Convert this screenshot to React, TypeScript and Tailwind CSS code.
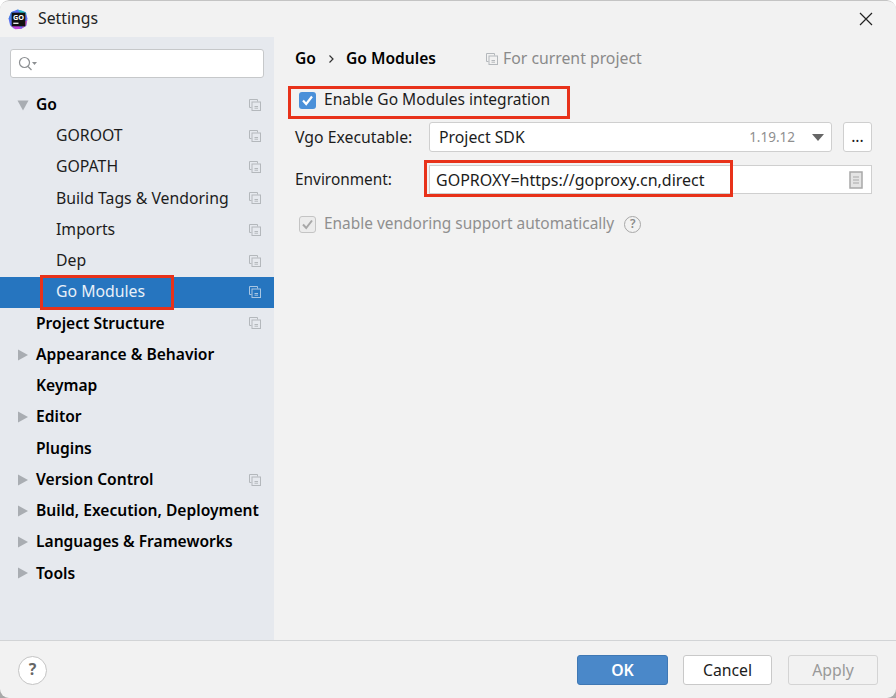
import React from "react";

const CopyIcon = ({ c = "#b4b8bc" }: { c?: string }) => (
  <svg width="12" height="12" viewBox="0 0 12 12" fill="none" stroke={c} strokeWidth="1">
    <path d="M2.5 8.5h-2v-8h8v2" />
    <rect x="3" y="3" width="8.5" height="8.5" fill="none" />
    <path d="M5.5 7.5h3.5M5.5 9.2h3.5" />
  </svg>
);

const Arrow = ({ dir }: { dir: "down" | "right" }) => (
  <svg width="12" height="12" viewBox="0 0 12 12" fill="#a9adb2">
    {dir === "down" ? <path d="M0.5 1.5h11L6 11.5z" /> : <path d="M1 0.5v11L11 6z" />}
  </svg>
);

type Row = { t: string; bold?: boolean; indent?: boolean; arrow?: "down" | "right"; copy?: boolean; sel?: boolean };

const rows: Row[] = [
  { t: "Go", bold: true, arrow: "down", copy: true },
  { t: "GOROOT", indent: true, copy: true },
  { t: "GOPATH", indent: true, copy: true },
  { t: "Build Tags & Vendoring", indent: true, copy: true },
  { t: "Imports", indent: true, copy: true },
  { t: "Dep", indent: true, copy: true },
  { t: "Go Modules", indent: true, copy: true, sel: true },
  { t: "Project Structure", bold: true, copy: true },
  { t: "Appearance & Behavior", bold: true, arrow: "right" },
  { t: "Keymap", bold: true },
  { t: "Editor", bold: true, arrow: "right" },
  { t: "Plugins", bold: true },
  { t: "Version Control", bold: true, arrow: "right", copy: true },
  { t: "Build, Execution, Deployment", bold: true, arrow: "right" },
  { t: "Languages & Frameworks", bold: true, arrow: "right" },
  { t: "Tools", bold: true, arrow: "right" },
];

const Logo = () => (
  <svg width="21" height="21" viewBox="0 0 20 20">
    <path d="M3 3 9 0.5l5 1.5 3 1 1.5 6-1 7-5 3-7-.5-3.5-3L.5 9z" fill="#5a6ff0" />
    <path d="M9 .5 14 2l3.5 2-2 4z" fill="#29c5c9" />
    <path d="M.8 9 3 3l3-1-2 9z" fill="#3f7fe0" />
    <path d="M3 16l4 3.2 6-.4-4-4z" fill="#c044d8" />
    <path d="M13 18.500l4-3 1.500-5-3 2z" fill="#d14fc0" />
    <rect x="3.500" y="3.500" width="13" height="13" fill="#111" />
    <text x="10" y="10" textAnchor="middle" fontSize="7" fontWeight="700" fill="#fff" fontFamily="Noto Sans">GO</text>
    <rect x="5" y="13" width="5" height="1.200" fill="#fff" />
  </svg>
);

export default function App() {
  return (
    <div className="w-[896px] h-[698px] bg-gradient-to-b from-white via-white to-[#a8a8a8]">
      <div className="relative w-[896px] h-[698px] overflow-hidden rounded-[9px] bg-[#f2f2f2] text-[15.8px] whitespace-nowrap text-[#1c1c1c] font-['Noto_Sans',sans-serif] flex flex-col">
        <div className="h-[37px] shrink-0 flex items-center pl-[8px] pr-[23px] border-t border-[#c4c4c4] rounded-t-[9px]">
          <Logo />
          <span className="ml-[9px] text-[#222]">Settings</span>
          <svg className="ml-auto" width="14" height="14" viewBox="0 0 14 14" stroke="#222" strokeWidth="1.200"><path d="M1 1l12 12M13 1 1 13" /></svg>
        </div>
        <div className="flex flex-1 min-h-0">
          <aside className="w-[274px] shrink-0 bg-[#e6e9ee] flex flex-col">
            <div className="mt-[12px] mx-[10px] h-[29px] bg-white border border-[#c6c8ca] rounded-[3px] flex items-center pl-[7px] shrink-0">
              <svg width="20" height="16" viewBox="0 0 20 16" fill="none" stroke="#8c8f92" strokeWidth="1.200">
                <circle cx="6.500" cy="6.500" r="5" />
                <path d="M10 10.500l3.500 3.500" />
                <path d="M14 6h5l-2.500 3z" fill="#8c8f92" stroke="none" />
              </svg>
            </div>
            <div className="mt-[11px] flex flex-col">
              {rows.map((r) => (
                <div key={r.t} className={`h-[31.25px] flex items-center pr-[13px] ${r.sel ? "bg-[#2675bf] text-[#e8f0f8]" : ""}`}>
                  <span className="w-[36px] pl-[17px] shrink-0 flex">{r.arrow && <Arrow dir={r.arrow} />}</span>
                  <span className={`${r.indent ? "ml-[20px]" : ""} ${r.bold ? "font-semibold text-black text-[15.6px]" : ""}`}>{r.t}</span>
                  {r.copy && <span className="ml-auto flex"><CopyIcon c={r.sel ? "#a9c6e2" : "#b4b8bc"} /></span>}
                </div>
              ))}
            </div>
          </aside>
          <main className="flex-1 pl-[21px] pr-[24px] flex flex-col">
            <div className="mt-[11px] h-[22px] flex items-center">
              <span className="font-semibold text-black text-[15.6px]">Go</span>
              <svg className="ml-[11px]" width="8" height="10" viewBox="0 0 8 10" fill="none" stroke="#333" strokeWidth="1.200"><path d="M2.500 1.500 6 5 2.500 8.500" /></svg>
              <span className="ml-[11px] font-semibold text-black text-[15.6px]">Go Modules</span>
              <span className="ml-[50px] flex"><CopyIcon /></span>
              <span className="ml-[5px] text-[#8a8a8a]">For current project</span>
            </div>
            <div className="mt-[19px] h-[22px] flex items-center pl-[4px]">
              <span className="w-[17px] h-[17px] rounded-[3px] bg-[#4a90d9] flex items-center justify-center">
                <svg width="13" height="13" viewBox="0 0 13 13" fill="none" stroke="#fff" strokeWidth="2.200"><path d="M2 6.500l3.200 3.500L11 2.500" /></svg>
              </span>
              <span className="ml-[8px] text-[15.55px]">Enable Go Modules integration</span>
            </div>
            <div className="mt-[11px] h-[30px] flex items-center">
              <span className="w-[134px] pt-[1px]">Vgo Executable:</span>
              <div className="w-[403px] h-[30px] bg-white border border-[#cfcfcf] rounded-[3px] flex items-center pl-[9px] pr-[7px]">
                <span className="pt-[1px]">Project SDK</span>
                <span className="ml-auto text-[13.500px] text-[#8f8f8f]">1.19.12</span>
                <svg className="ml-[17px]" width="12" height="7" viewBox="0 0 12 7" fill="#666"><path d="M0 0h12L6 7z" /></svg>
              </div>
              <div className="ml-[11px] w-[29px] h-[30px] bg-white border border-[#cfcfcf] rounded-[3px] flex items-center justify-center">...</div>
            </div>
            <div className="mt-[13px] h-[29px] flex items-center">
              <span className="w-[134px] text-[15.4px]">Environment:</span>
              <div className="flex-1 h-[29px] bg-white border border-[#cfcfcf] flex items-center pl-[6px] pr-[8px]">
                <span className="text-[16px]">GOPROXY=https://goproxy.cn,direct</span>
                <svg className="ml-auto" width="14" height="18" viewBox="0 0 14 18" fill="none" stroke="#a8a8a8"><rect x="1" y="1" width="12" height="16" fill="#e4e4e4" strokeWidth="1.500" /><path d="M4 6h6M4 9h6M4 12h6" /></svg>
              </div>
            </div>
            <div className="mt-[19px] h-[22px] flex items-center pl-[4px] text-[#8f8f8f]">
              <span className="w-[17px] h-[17px] rounded-[3px] bg-[#ececec] border border-[#c4c4c4] flex items-center justify-center">
                <svg width="13" height="13" viewBox="0 0 13 13" fill="none" stroke="#a8a8a8" strokeWidth="2"><path d="M2 6.500l3.200 3.500L11 2.500" /></svg>
              </span>
              <span className="ml-[8px] text-[15.45px]">Enable vendoring support automatically</span>
              <span className="ml-[10px] w-[17px] h-[17px] rounded-full border border-[#a8a8a8] flex items-center justify-center text-[12px] font-semibold text-[#8a8a8a]">?</span>
            </div>
          </main>
        </div>
        <footer className="h-[58px] shrink-0 border-t border-[#d2d4d6] flex items-center pl-[18px] pr-[18px] pt-[1px]">
          <span className="w-[29px] h-[29px] rounded-full bg-white border border-[#c4c4c4] flex items-center justify-center font-bold text-[#666]">?</span>
          <button className="ml-auto w-[91px] h-[30px] pt-[1px] rounded-[3px] bg-[#4a88c9] border border-[#3f78b4] text-white font-semibold">OK</button>
          <button className="ml-[15px] w-[89px] h-[30px] pt-[1px] rounded-[3px] bg-white border border-[#c9c9c9]">Cancel</button>
          <button className="ml-[16px] w-[90px] h-[30px] pt-[1px] rounded-[3px] border border-[#d4d4d4] text-[#999]">Apply</button>
        </footer>
        <div className="absolute left-[40px] top-[275px] w-[134px] h-[35px] border-[3px] border-[#e8321a]" />
        <div className="absolute left-[288px] top-[86px] w-[282px] h-[33px] border-[3px] border-[#e8321a]" />
        <div className="absolute left-[424px] top-[160px] w-[309px] h-[37px] border-[3px] border-[#e8321a]" />
      </div>
    </div>
  );
}
